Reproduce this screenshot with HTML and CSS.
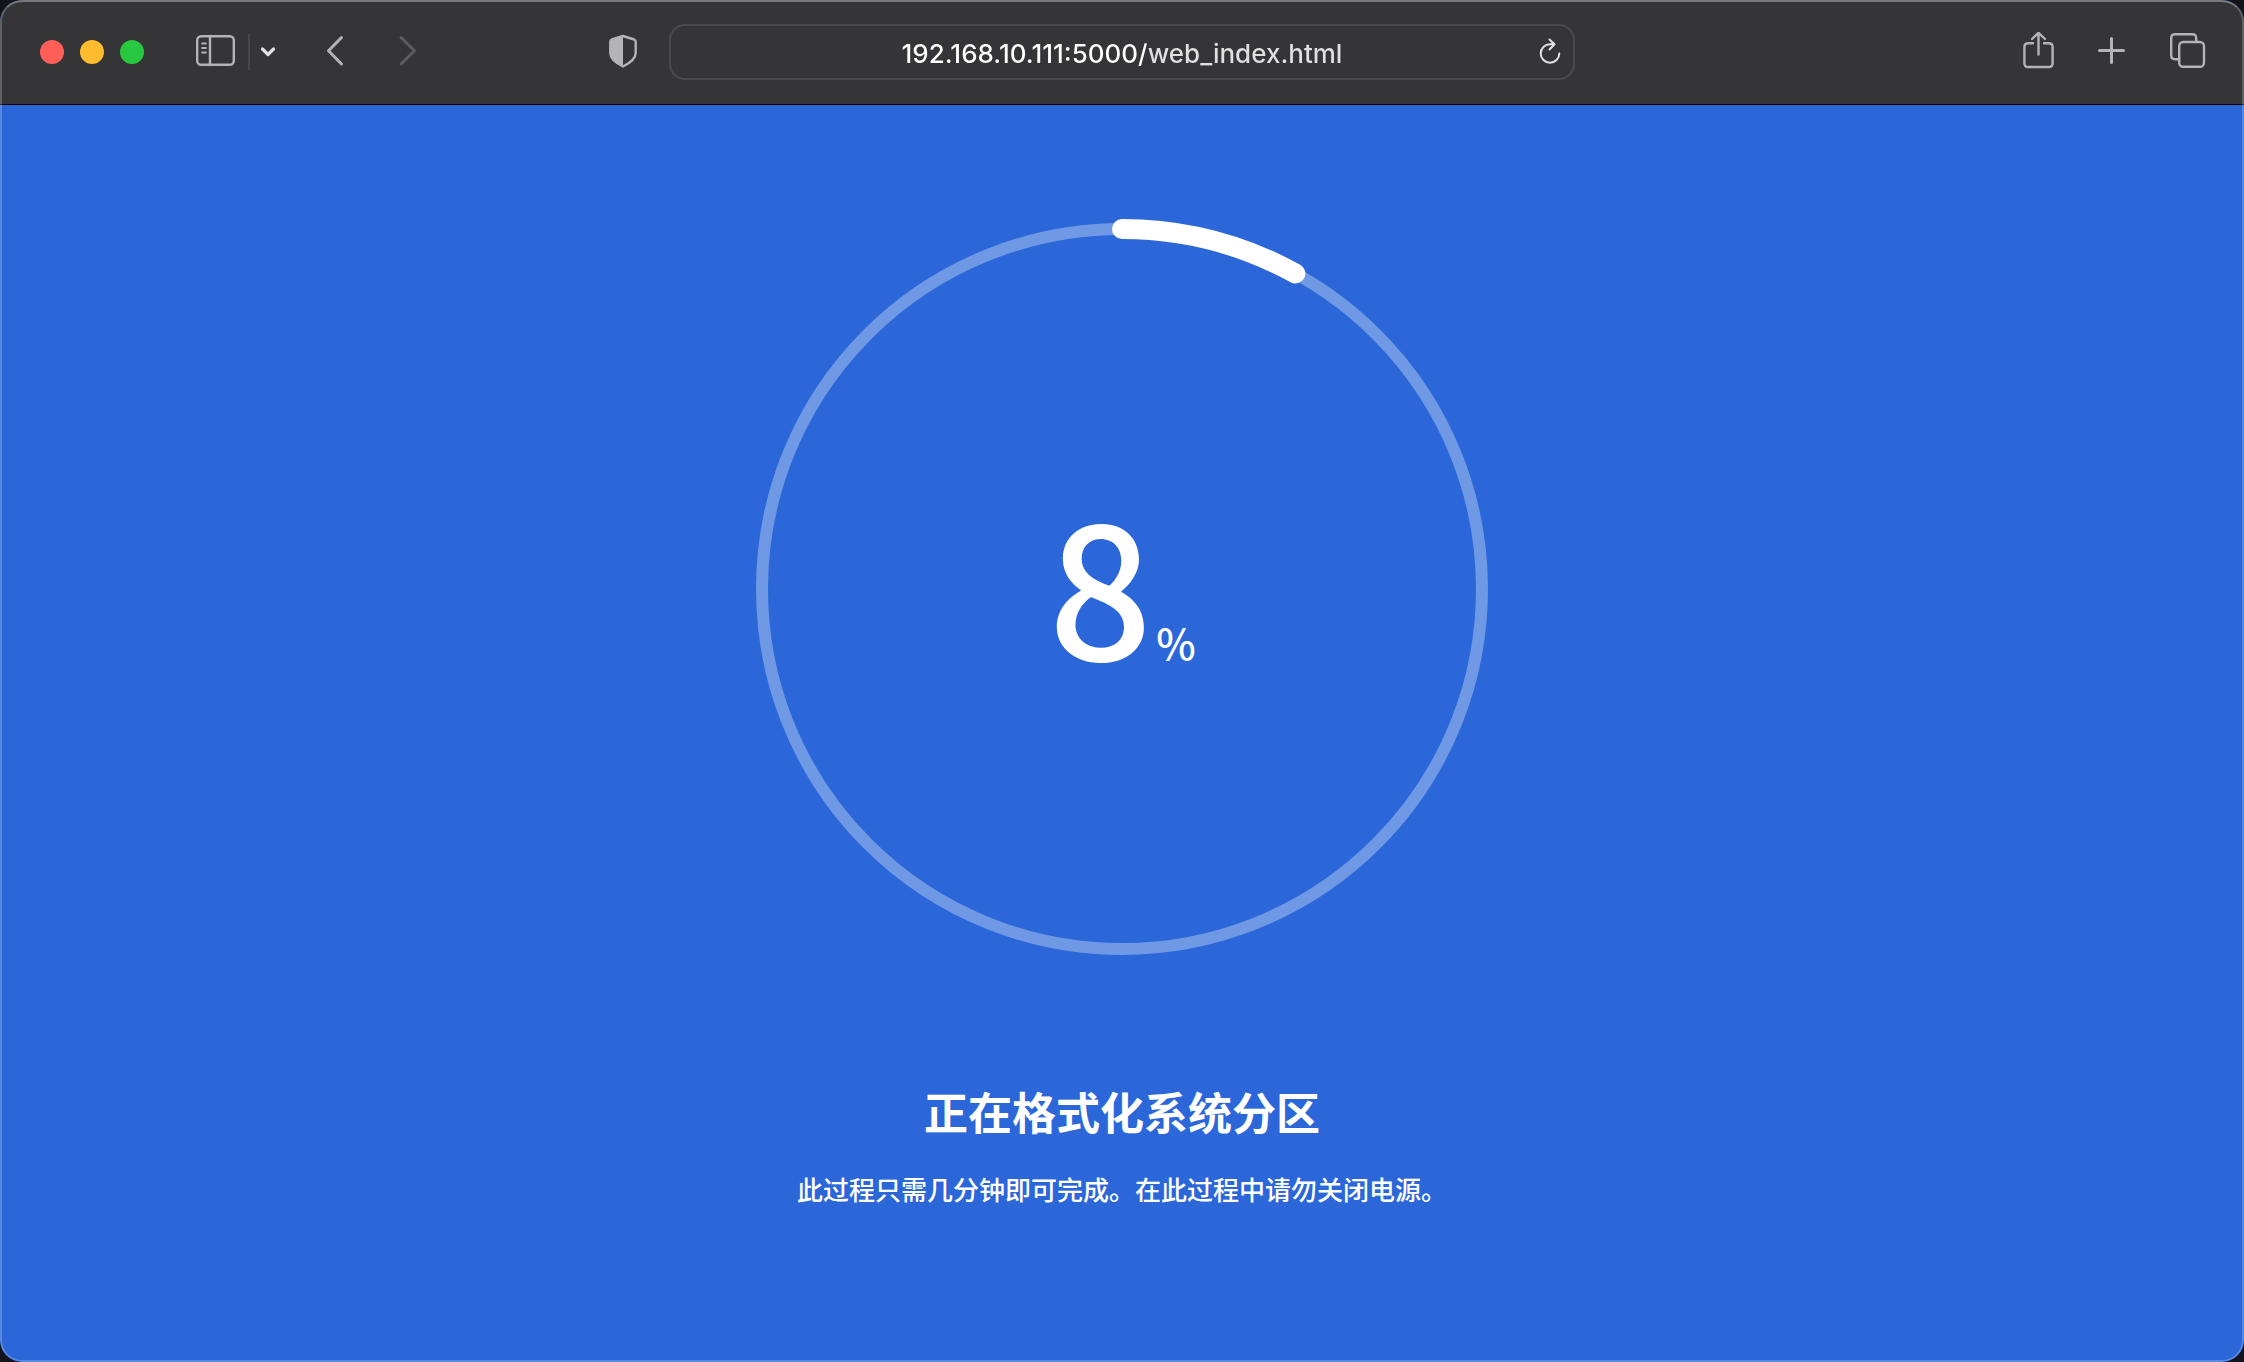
FILE: index.html
```html
<!DOCTYPE html>
<html lang="zh-CN">
<head>
  <meta charset="utf-8">
  <meta name="viewport" content="width=device-width, initial-scale=1">
  <title>正在格式化系统分区</title>
  <link rel="stylesheet" href="styles.css">
</head>
<body>
  <div class="window">
    <header class="toolbar">
      <div class="toolbar-start">
        <div class="lights">
          <button class="light light-close" type="button" aria-label="Close"></button>
          <button class="light light-minimize" type="button" aria-label="Minimize"></button>
          <button class="light light-zoom" type="button" aria-label="Zoom"></button>
        </div>
        <div class="sidebar-group">
          <button class="tool" type="button" aria-label="Sidebar">
            <svg width="40" height="40" viewBox="0 0 40 40"><rect x="1.2" y="4.2" width="36.6" height="28.6" rx="4"/><path d="M14 4v29"/><path class="thin" d="M6 11.500h4M6 16h4M6 20.500h4"/></svg>
          </button>
          <span class="divider"></span>
          <button class="tool tool-bright" type="button" aria-label="Tab groups">
            <svg width="16" height="40" viewBox="0 0 16 40"><path class="bold" d="M2.500 17L8 22.500l5.500-5.500"/></svg>
          </button>
        </div>
        <div class="nav-group">
          <button class="tool" type="button" aria-label="Back">
            <svg width="24" height="40" viewBox="0 0 24 40"><path class="medium" d="M17.500 5.500L4.500 18.800 17.500 32"/></svg>
          </button>
          <button class="tool" type="button" aria-label="Forward" disabled>
            <svg width="24" height="40" viewBox="0 0 24 40"><path class="medium" d="M5 5.500L18.500 18.800 5 32"/></svg>
          </button>
        </div>
        <button class="tool privacy" type="button" aria-label="Privacy report">
          <svg width="28" height="40" viewBox="0 0 28 40"><path d="M14 4L25.200 7.500Q26.700 8.100 26.700 9.500V21C26.700 27 20 31.500 14 34.500C8 31.500 1.300 27 1.300 21V9.500Q1.300 8.100 2.800 7.500Z"/><path class="filled" d="M14 3.500L2.500 7.300Q1 8 1 9.500V21.500C1 27.500 8 31.500 14 34.500Z"/></svg>
        </button>
      </div>

      <form class="address">
        <input class="address-input" type="text" aria-label="Address" value="192.168.10.111:5000/web_index.html" spellcheck="false">
        <button class="tool tool-bright reload" type="button" aria-label="Reload">
          <svg width="24" height="32" viewBox="0 0 24 32"><path class="fine" d="M22.300 17.500A9.300 9.300 0 1 1 13 8.200H17.500M12.500 3.500L17.500 8.200L12.500 13.500"/></svg>
        </button>
      </form>

      <div class="toolbar-end">
        <button class="tool" type="button" aria-label="Share">
          <svg width="32" height="40" viewBox="0 0 32 40"><path d="M11 11.200H6.200Q2.400 11.200 2.400 15V31.200Q2.400 35 6.200 35H26.800Q30.600 35 30.600 31.200V15Q30.600 11.200 26.800 11.200H22M16.500 22.500V1M10 7L16.500 0.800L23 7"/></svg>
        </button>
        <button class="tool" type="button" aria-label="New tab">
          <svg width="28" height="40" viewBox="0 0 28 40"><path class="medium" d="M1.500 18.500H25.500M13.500 6.500V30.500"/></svg>
        </button>
        <button class="tool" type="button" aria-label="Tab overview">
          <svg width="36" height="40" viewBox="0 0 36 40"><rect x="9.200" y="10" width="24.800" height="24.800" rx="4"/><path d="M26.200 10V6.200Q26.200 2.200 22.200 2.200H5.200Q1.200 2.200 1.200 6.200V23.200Q1.200 27.200 5.200 27.200H9"/></svg>
        </button>
      </div>
    </header>

    <main class="install">
      <div class="progress" role="progressbar" aria-label="正在格式化系统分区" aria-valuemin="0" aria-valuemax="100" aria-valuenow="8">
        <svg class="ring" viewBox="0 0 740 740">
          <circle class="ring-track" cx="370" cy="370" r="360"/>
          <circle class="ring-value" cx="370" cy="370" r="360" pathLength="100" stroke-dasharray="8 92" transform="rotate(-90 370 370)"/>
        </svg>
        <p class="percent"><span class="percent-number">8</span><span class="percent-sign">%</span></p>
      </div>
      <h1 class="title">正在格式化系统分区</h1>
      <p class="note">此过程只需几分钟即可完成。在此过程中请勿关闭电源。</p>
    </main>
  </div>
</body>
</html>
```

FILE: styles.css
```css
* {
  box-sizing: border-box;
}

body {
  margin: 0;
  background: #14141d;
  font-family: "Noto Sans CJK SC", sans-serif;
}

.window {
  position: relative;
  display: flex;
  flex-direction: column;
  min-height: 100vh;
  border-radius: 22px;
  overflow: hidden;
  background: #2b67d9;
  color: #fff;
}

/* Light rim over the whole window edge */
.window::after {
  content: "";
  position: absolute;
  inset: 0;
  border: 2px solid rgba(255, 255, 255, 0.22);
  border-top-color: rgba(255, 255, 255, 0.34);
  border-radius: inherit;
  pointer-events: none;
}

.toolbar {
  display: grid;
  grid-template-columns: minmax(0, 1fr) minmax(0, 906px) minmax(0, 1fr);
  align-items: center;
  height: 105px;
  border-bottom: 1px solid #000;
  background: #353537;
}

.toolbar-start {
  display: flex;
  align-items: center;
  padding: 0 32px 0 40px;
}

.lights {
  display: flex;
  gap: 16px;
  margin-right: 52px;
}

.light {
  width: 24px;
  height: 24px;
  padding: 0;
  border: 0;
  border-radius: 50%;
}

.light-close {
  background: #ff5f57;
}

.light-minimize {
  background: #febc2e;
}

.light-zoom {
  background: #28c840;
}

.sidebar-group {
  display: flex;
  align-items: center;
  gap: 12px;
  margin-right: 48px;
}

.divider {
  width: 2px;
  height: 36px;
  margin-right: -2px;
  background: #48484a;
}

.nav-group {
  display: flex;
  gap: 48px;
}

.privacy {
  margin-left: auto;
}

.tool {
  display: flex;
  flex: none;
  padding: 0;
  border: 0;
  background: none;
  color: #b4b4b6;
}

.tool:disabled {
  color: #5c5c5e;
}

.tool-bright {
  color: #e2e2e3;
}

.tool svg {
  fill: none;
  stroke: currentColor;
  stroke-width: 2.4px;
  stroke-linecap: round;
  stroke-linejoin: round;
}

.tool .thin {
  stroke-width: 1.8px;
}

.tool .fine {
  stroke-width: 2px;
}

.tool .medium {
  stroke-width: 3px;
}

.tool .bold {
  stroke-width: 3.2px;
}

.tool .filled {
  fill: currentColor;
  stroke: none;
}

.address {
  display: flex;
  align-items: center;
  height: 56px;
  padding: 0 12px 0 36px;
  border: 2px solid #4b4b4d;
  border-radius: 16px;
}

/* The host is drawn brighter than the path that follows it */
.address-input {
  flex: 1;
  min-width: 0;
  height: 48px;
  padding: 2px 0 0;
  border: 0;
  outline: 0;
  background: linear-gradient(90deg, #fff calc(50% + 24px), #e0e0e1 0);
  background-clip: text;
  -webkit-background-clip: text;
  color: transparent;
  caret-color: #fff;
  font: 500 26px/46px Inter, sans-serif;
  text-align: center;
}

.toolbar-end {
  display: flex;
  justify-content: flex-end;
  gap: 44px;
  padding-right: 38px;
}

.install {
  display: flex;
  flex: 1;
  flex-direction: column;
  align-items: center;
  padding: 114px 24px 48px;
}

.progress {
  display: grid;
  place-items: center;
  width: 740px;
  max-width: 100%;
}

.ring,
.percent {
  grid-area: 1 / 1;
}

.ring {
  display: block;
  width: 100%;
  fill: none;
}

.ring-track {
  stroke: rgba(255, 255, 255, 0.32);
  stroke-width: 12px;
}

.ring-value {
  stroke: #fff;
  stroke-width: 20px;
  stroke-linecap: round;
}

.percent {
  display: flex;
  align-items: baseline;
  gap: 4px;
  margin: 0;
  padding-bottom: 16px;
}

.percent-number {
  font-size: 182px;
  font-weight: 500;
  line-height: 200px;
}

.percent-sign {
  font-size: 42px;
  font-weight: 500;
  line-height: 48px;
}

.title {
  margin: 122px 0 28px;
  font-size: 44px;
  font-weight: 700;
  line-height: 60px;
}

.note {
  margin: 0;
  font-size: 26px;
  font-weight: 500;
  line-height: 40px;
}
```
